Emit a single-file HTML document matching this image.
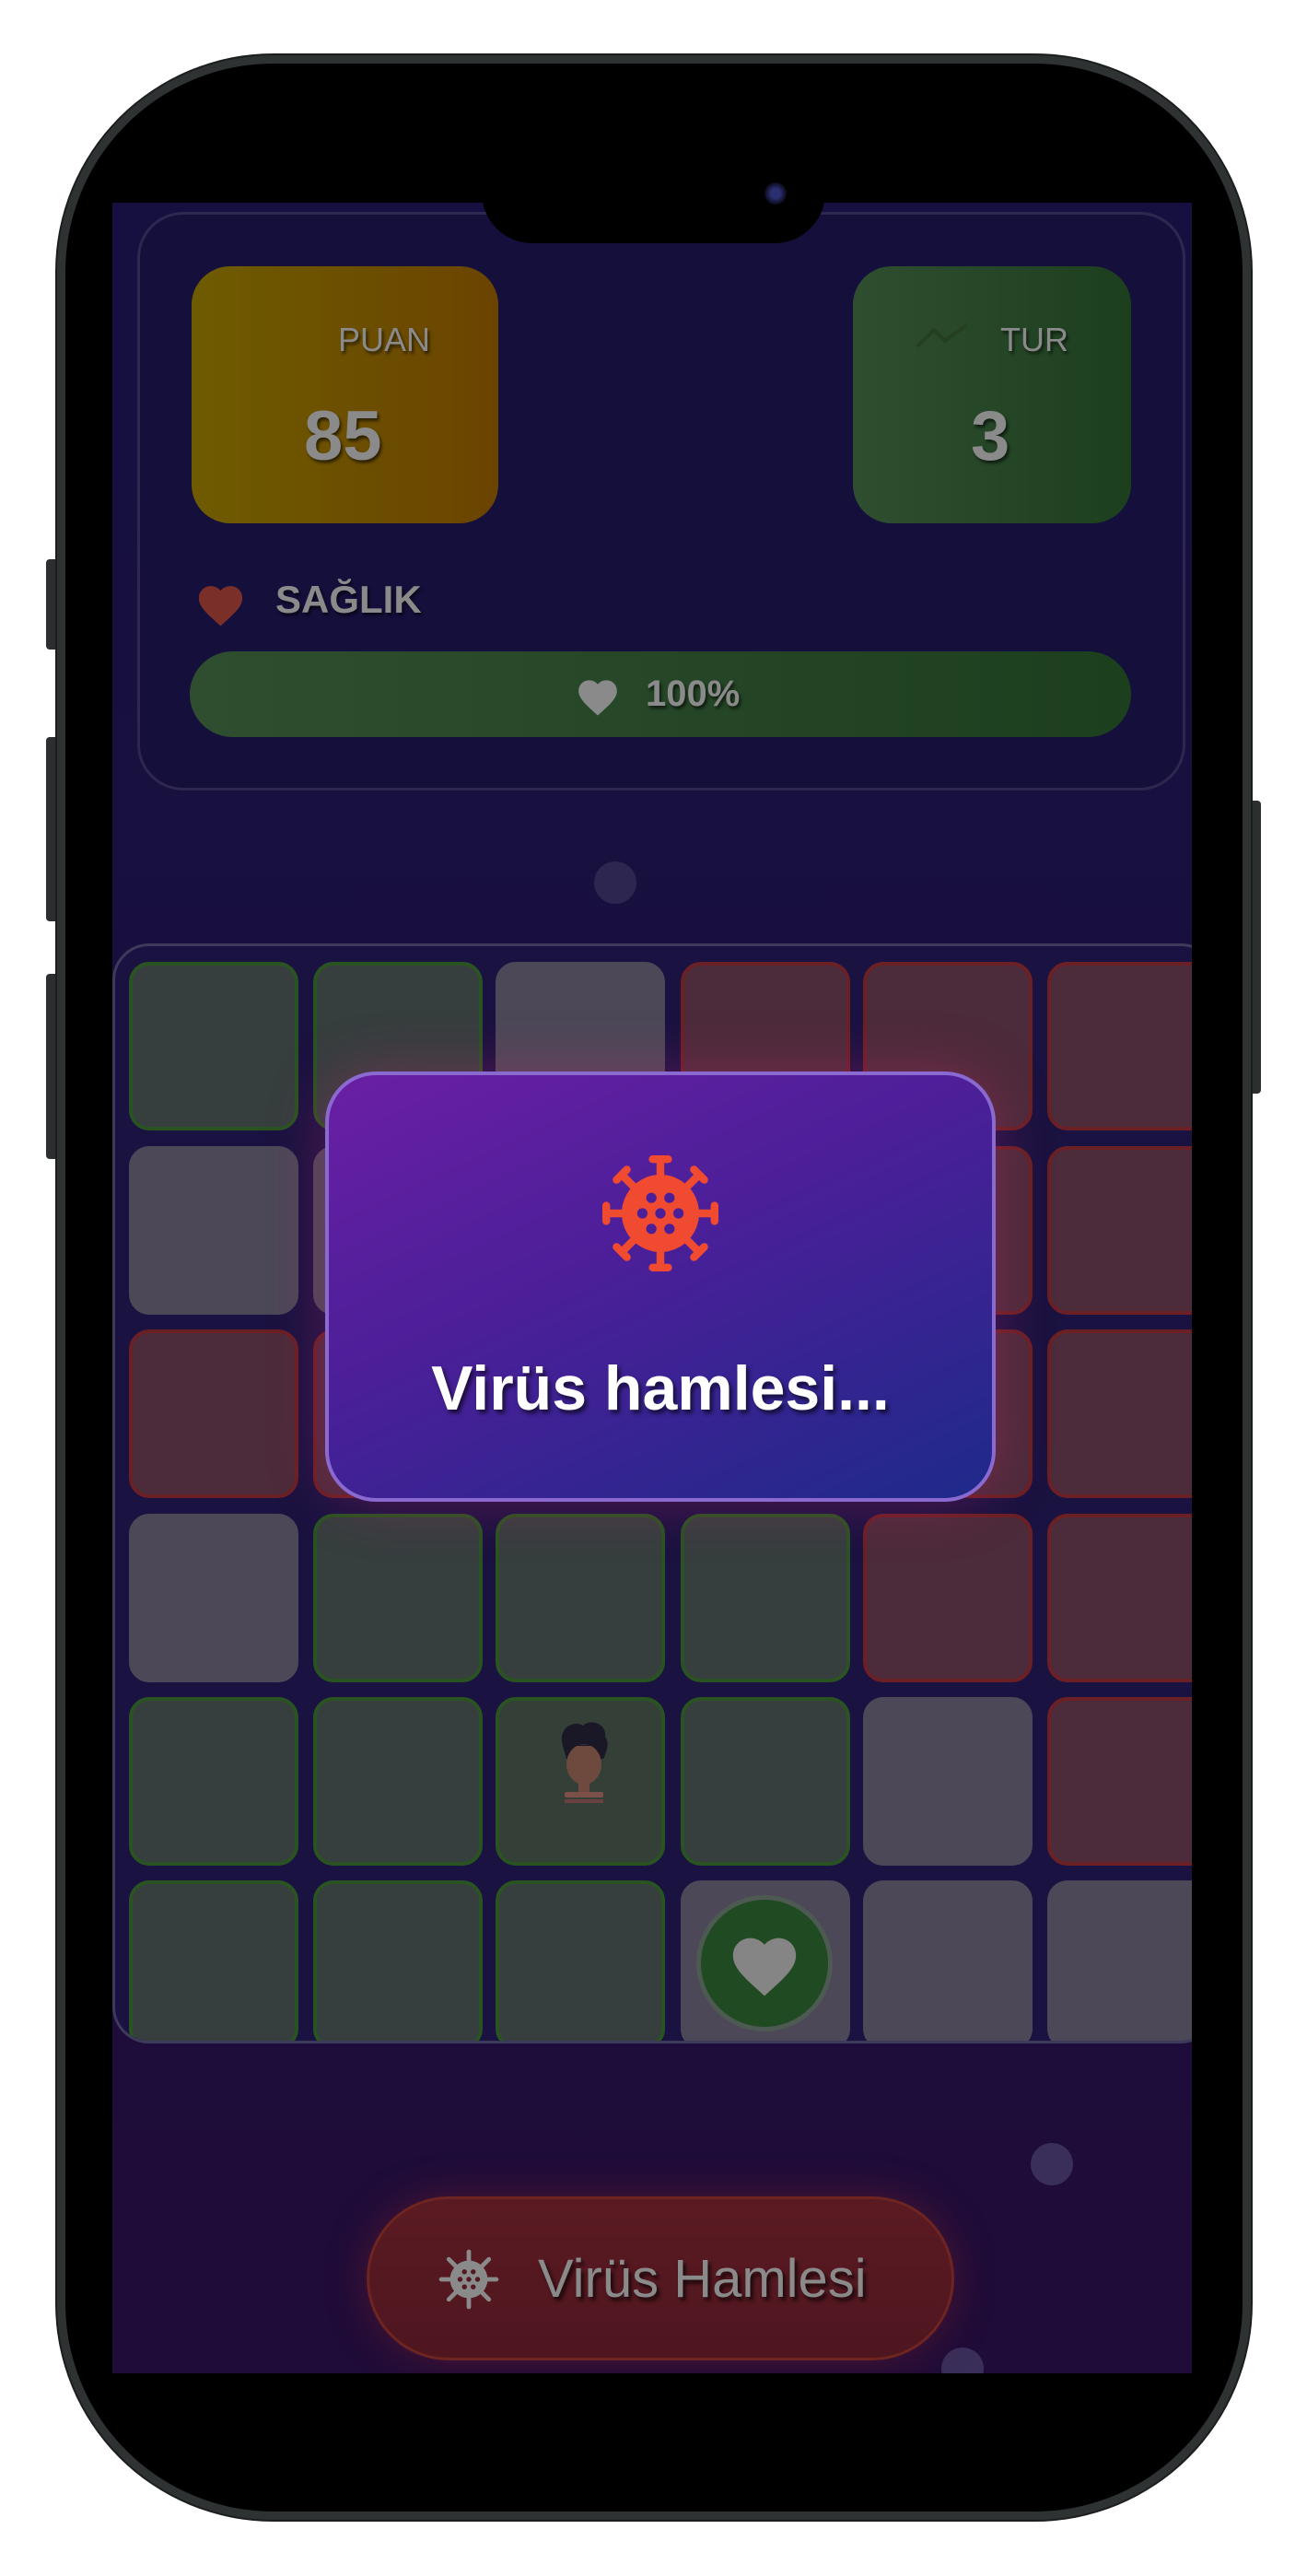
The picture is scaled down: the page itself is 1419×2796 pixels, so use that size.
<!DOCTYPE html>
<html><head><meta charset="utf-8"><style>
*{margin:0;padding:0;box-sizing:border-box}
body{width:1419px;height:2796px;background:#fff;position:relative;overflow:hidden;font-family:"Liberation Sans",sans-serif}
.a{position:absolute}
.btn{position:absolute;background:#2c2f2f;border-radius:4px}
.frame{left:62px;top:60px;width:1296px;height:2675px;border-radius:235px;background:#000;border:9px solid #2f3232;box-shadow:0 0 0 2px #1c1e1e}
.screen{left:122px;top:220px;width:1172px;height:2356px;background:linear-gradient(180deg,#151040 0%,#1a0f3e 50%,#200c38 100%);overflow:hidden}
.cell{position:absolute;width:184px;height:183px;border-radius:22px}
.g{background:#363e3e;border:4px solid #2a5322}
.y{background:#4c4858;border:4px solid #4c4858}
.r{background:#4c2b3a;border:4px solid #6a2024}
.t{color:#8a8a8a;font-weight:bold;text-shadow:2px 3px 3px rgba(0,0,0,.6)}
</style></head><body>
<div class="btn" style="left:50px;top:607px;width:14px;height:98px"></div>
<div class="btn" style="left:50px;top:800px;width:14px;height:200px"></div>
<div class="btn" style="left:50px;top:1057px;width:14px;height:201px"></div>
<div class="btn" style="left:1355px;top:869px;width:14px;height:318px"></div>
<div class="a frame"></div>
<div class="a screen">
 <!-- bubble -->
 <div class="a" style="left:523px;top:715px;width:46px;height:46px;border-radius:50%;background:#2c2650"></div>
 <div class="a" style="left:997px;top:2106px;width:46px;height:46px;border-radius:50%;background:#3a2e5a"></div>
 <div class="a" style="left:900px;top:2328px;width:46px;height:46px;border-radius:50%;background:#3a2e5a"></div>
 <!-- top card -->
 <div class="a" style="left:27px;top:10px;width:1138px;height:628px;border-radius:50px;border:3px solid #2e2750;background:#150f3c"></div>
 <div class="a" style="left:86px;top:69px;width:333px;height:279px;border-radius:42px;background:linear-gradient(90deg,#6e5b00,#6b4400)"></div>
 <div class="a t" style="left:245px;top:128px;font-size:36px;font-weight:500">PUAN</div>
 <div class="a t" style="left:208px;top:210px;font-size:76px">85</div>
 <div class="a" style="left:804px;top:69px;width:302px;height:279px;border-radius:42px;background:linear-gradient(90deg,#2f4e30,#1c3f1e)"></div>
 <svg class="a" style="left:872px;top:130px" width="58" height="30" viewBox="0 0 58 30"><polyline points="2,26 20,8 32,20 56,2" fill="none" stroke="#24401f" stroke-width="4"/></svg>
 <div class="a t" style="left:964px;top:128px;font-size:36px;font-weight:500">TUR</div>
 <div class="a t" style="left:932px;top:210px;font-size:76px">3</div>
 <svg class="a" style="left:88px;top:409px" width="59" height="52" viewBox="0 0 24 22"><path d="M12 21.35l-1.45-1.32C5.4 15.36 2 12.28 2 8.5 2 5.42 4.42 3 7.5 3c1.74 0 3.41.81 4.5 2.09C13.09 3.81 14.76 3 16.5 3 19.58 3 22 5.42 22 8.5c0 3.78-3.4 6.86-8.55 11.54L12 21.35z" fill="#7a3028"/></svg>
 <div class="a t" style="left:177px;top:407px;font-size:42px">SAĞLIK</div>
 <div class="a" style="left:84px;top:487px;width:1022px;height:93px;border-radius:47px;background:linear-gradient(90deg,#2f4e30,#1c3f1e)"></div>
 <svg class="a" style="left:502px;top:512px" width="50" height="46" viewBox="0 0 24 22"><path d="M12 21.35l-1.45-1.32C5.4 15.36 2 12.28 2 8.5 2 5.42 4.42 3 7.5 3c1.74 0 3.41.81 4.5 2.09C13.09 3.81 14.76 3 16.5 3 19.58 3 22 5.42 22 8.5c0 3.78-3.4 6.86-8.55 11.54L12 21.35z" fill="#8a8a8a"/></svg>
 <div class="a t" style="left:579px;top:511px;font-size:40px">100%</div>
 <!-- grid -->
 <div class="a" style="left:0;top:804px;width:1200px;height:1194px;border-radius:40px;border:3px solid #3e3a5c;background:#1a1240;overflow:hidden">
  <div style="position:absolute;left:-122px;top:-1024px">
   <div class="cell g" style="left:137px;top:1041px"></div>
   <div class="cell g" style="left:337px;top:1041px"></div>
   <div class="cell y" style="left:535px;top:1041px"></div>
   <div class="cell r" style="left:736px;top:1041px"></div>
   <div class="cell r" style="left:934px;top:1041px"></div>
   <div class="cell r" style="left:1134px;top:1041px"></div>
   <div class="cell y" style="left:137px;top:1241px"></div>
   <div class="cell y" style="left:337px;top:1241px"></div>
   <div class="cell y" style="left:535px;top:1241px"></div>
   <div class="cell r" style="left:736px;top:1241px"></div>
   <div class="cell r" style="left:934px;top:1241px"></div>
   <div class="cell r" style="left:1134px;top:1241px"></div>
   <div class="cell r" style="left:137px;top:1440px"></div>
   <div class="cell r" style="left:337px;top:1440px"></div>
   <div class="cell y" style="left:535px;top:1440px"></div>
   <div class="cell r" style="left:736px;top:1440px"></div>
   <div class="cell r" style="left:934px;top:1440px"></div>
   <div class="cell r" style="left:1134px;top:1440px"></div>
   <div class="cell y" style="left:137px;top:1640px"></div>
   <div class="cell g" style="left:337px;top:1640px"></div>
   <div class="cell g" style="left:535px;top:1640px"></div>
   <div class="cell g" style="left:736px;top:1640px"></div>
   <div class="cell r" style="left:934px;top:1640px"></div>
   <div class="cell r" style="left:1134px;top:1640px"></div>
   <div class="cell g" style="left:137px;top:1839px"></div>
   <div class="cell g" style="left:337px;top:1839px"></div>
   <div class="cell g" style="left:535px;top:1839px;background:#343f38"></div>
   <div class="cell g" style="left:736px;top:1839px"></div>
   <div class="cell y" style="left:934px;top:1839px"></div>
   <div class="cell r" style="left:1134px;top:1839px"></div>
   <div class="cell g" style="left:137px;top:2038px"></div>
   <div class="cell g" style="left:337px;top:2038px"></div>
   <div class="cell g" style="left:535px;top:2038px"></div>
   <div class="cell y" style="left:736px;top:2038px"></div>
   <div class="cell y" style="left:934px;top:2038px"></div>
   <div class="cell y" style="left:1134px;top:2038px"></div>
   <!-- character -->
   <svg style="position:absolute;left:600px;top:1862px" width="62" height="110" viewBox="0 0 62 110">
    <path d="M8 30 C2 10 20 2 30 8 C38 0 56 6 54 20 C60 28 54 40 52 44 L12 44 Z" fill="#1a1826"/>
    <ellipse cx="31" cy="50" rx="19" ry="22" fill="#6e4a3e"/>
    <path d="M10 36 C18 26 44 26 52 36 L52 30 L10 30Z" fill="#1a1826"/>
    <rect x="25" y="68" width="12" height="14" fill="#6e4a3e"/>
    <rect x="10" y="80" width="42" height="6" rx="2" fill="#7a5048"/>
    <rect x="10" y="88" width="42" height="4" fill="#6a4040"/>
   </svg>
   <!-- heart circle -->
   <div style="position:absolute;left:753px;top:2054px;width:148px;height:148px;border-radius:50%;border:5px solid #4c5a52;background:#1f4a22"></div>
   <svg style="position:absolute;left:786px;top:2090px" width="82" height="76" viewBox="0 0 24 22"><path d="M12 21.35l-1.45-1.32C5.4 15.36 2 12.28 2 8.5 2 5.42 4.42 3 7.5 3c1.74 0 3.41.81 4.5 2.09C13.09 3.81 14.76 3 16.5 3 19.58 3 22 5.42 22 8.5c0 3.78-3.4 6.86-8.55 11.54L12 21.35z" fill="#858585"/></svg>
  </div>
 </div>
 <!-- modal -->
 <div class="a" style="left:231px;top:943px;width:728px;height:467px;border-radius:55px;border:4px solid #8a6ad0;background:linear-gradient(155deg,#6a1fa4 0%,#4a1f98 45%,#1e2a8a 100%);box-shadow:0 0 60px rgba(200,40,120,.35)"></div>
 <svg class="a" style="left:525px;top:1027px" width="140" height="140" viewBox="0 0 100 100">
  <g stroke="#f04a30" stroke-width="6" stroke-linecap="round">
   <line x1="50" y1="50" x2="50" y2="8"/><line x1="50" y1="50" x2="50" y2="92"/>
   <line x1="50" y1="50" x2="8" y2="50"/><line x1="50" y1="50" x2="92" y2="50"/>
   <line x1="50" y1="50" x2="20" y2="20"/><line x1="50" y1="50" x2="80" y2="80"/>
   <line x1="50" y1="50" x2="80" y2="20"/><line x1="50" y1="50" x2="20" y2="80"/>
   <line x1="44" y1="8" x2="56" y2="8"/><line x1="44" y1="92" x2="56" y2="92"/>
   <line x1="8" y1="44" x2="8" y2="56"/><line x1="92" y1="44" x2="92" y2="56"/>
   <line x1="16" y1="24" x2="24" y2="16"/><line x1="76" y1="84" x2="84" y2="76"/>
   <line x1="76" y1="16" x2="84" y2="24"/><line x1="16" y1="76" x2="24" y2="84"/>
  </g>
  <circle cx="50" cy="50" r="30" fill="#f04a30"/>
  <g fill="#4a1f98"><circle cx="43" cy="38" r="4"/><circle cx="57" cy="38" r="4"/><circle cx="36" cy="50" r="4"/><circle cx="50" cy="50" r="4"/><circle cx="64" cy="50" r="4"/><circle cx="43" cy="62" r="4"/><circle cx="57" cy="62" r="4"/></g>
 </svg>
 <div class="a" style="left:231px;top:1248px;width:728px;text-align:center;color:#fff;font-weight:bold;font-size:68px;text-shadow:3px 4px 5px rgba(0,0,0,.6)">Virüs hamlesi...</div>
 <!-- bottom button -->
 <div class="a" style="left:276px;top:2164px;width:638px;height:178px;border-radius:89px;border:3px solid #6e2420;background:linear-gradient(180deg,#5a1a22,#4f161f);box-shadow:0 0 40px rgba(120,30,40,.5)"></div>
 <svg class="a" style="left:353px;top:2220px" width="68" height="68" viewBox="0 0 100 100">
  <g stroke="#8a8a8a" stroke-width="7" stroke-linecap="round">
   <line x1="50" y1="50" x2="50" y2="6"/><line x1="50" y1="50" x2="50" y2="94"/>
   <line x1="50" y1="50" x2="6" y2="50"/><line x1="50" y1="50" x2="94" y2="50"/>
   <line x1="50" y1="50" x2="18" y2="18"/><line x1="50" y1="50" x2="82" y2="82"/>
   <line x1="50" y1="50" x2="82" y2="18"/><line x1="50" y1="50" x2="18" y2="82"/>
  </g>
  <circle cx="50" cy="50" r="30" fill="#8a8a8a"/>
  <g fill="#541822"><circle cx="43" cy="38" r="4"/><circle cx="57" cy="38" r="4"/><circle cx="36" cy="50" r="4"/><circle cx="50" cy="50" r="4"/><circle cx="64" cy="50" r="4"/><circle cx="43" cy="62" r="4"/><circle cx="57" cy="62" r="4"/></g>
 </svg>
 <div class="a" style="left:462px;top:2220px;color:#8a8a8a;font-size:58px;font-weight:500;text-shadow:3px 4px 4px rgba(0,0,0,.7)">Virüs Hamlesi</div>
</div>
<!-- dynamic island -->
<div class="a" style="left:523px;top:154px;width:373px;height:110px;border-radius:55px;background:#000"></div>
<div class="a" style="left:830px;top:198px;width:24px;height:24px;border-radius:50%;background:radial-gradient(circle,#2a2f70 30%,#0a0a1a 70%)"></div>
</body></html>
